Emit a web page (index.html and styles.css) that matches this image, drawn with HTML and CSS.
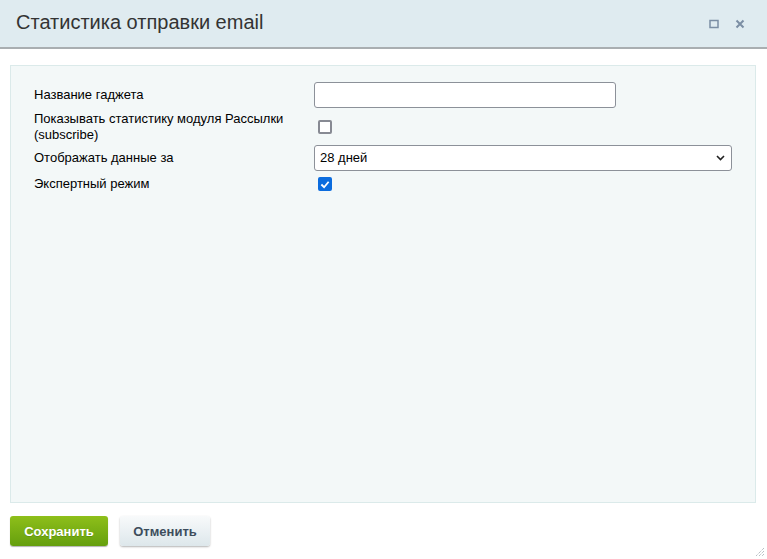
FILE: index.html
```
<!doctype html>
<html>
<head>
<meta charset="utf-8">
<title>Статистика отправки email</title>
<link rel="stylesheet" href="styles.css">
</head>
<body>
	<div class="dialog">
		<div class="head">
			<span class="title">Статистика отправки email</span>
			<span class="icons">
				<svg width="10" height="10" viewBox="0 0 10 10"><rect x="1" y="1.5" width="8" height="7" fill="none" stroke="#7b8ea4" stroke-width="1.5"/></svg>
				<svg width="10" height="10" viewBox="0 0 10 10"><path d="M1.5 1.5L8.5 8.5M8.5 1.5L1.5 8.5" stroke="#7b8ea4" stroke-width="2"/></svg>
			</span>
		</div>
		<div class="content">
			<div class="panel">
				<table class="form">
					<tr>
						<td class="lbl">Название гаджета</td>
						<td><input type="text" class="txt"></td>
					</tr>
					<tr class="r2">
						<td class="lbl">Показывать статистику модуля Рассылки (subscribe)</td>
						<td><span class="chk"></span></td>
					</tr>
					<tr>
						<td class="lbl">Отображать данные за</td>
						<td>
							<div class="sel">28 дней
								<svg width="9" height="6" viewBox="0 0 9 6"><path d="M1 1l3.5 3.5L8 1" fill="none" stroke="#222" stroke-width="1.6"/></svg>
							</div>
						</td>
					</tr>
					<tr class="r4">
						<td class="lbl">Экспертный режим</td>
						<td><span class="chk on"><svg width="11" height="9" viewBox="0 0 11 9"><path d="M1.5 4.5l3 3L9.5 1.5" fill="none" stroke="#fff" stroke-width="2"/></svg></span></td>
					</tr>
				</table>
			</div>
		</div>
		<div class="foot">
			<span class="btn save">Сохранить</span>
			<span class="btn cancel">Отменить</span>
		</div>
		<svg class="grip" width="10" height="10" viewBox="0 0 10 10"><path d="M9 1L1 9M9 4L4 9M9 7L7 9" stroke="#9aa4ab" stroke-width="1" stroke-dasharray="1 1"/></svg>
	</div>
</body>
</html>
```
FILE: styles.css
```
*{ margin:0; padding:0; box-sizing:border-box; }
body{ width:767px; height:559px; background:#fff; font-family:"Liberation Sans", Arial, sans-serif; font-size:13px; color:#000; overflow:hidden; }
.dialog{ position:relative; height:559px; display:flex; flex-direction:column; }
.head{ height:49px; background:#dfebf0; border-bottom:2px solid #a9aeb1; display:flex; align-items:center; justify-content:space-between; padding:0 22px 0 16px; flex-shrink:0; }
.title{ font-size:20px; color:#333; margin-top:-2px; }
.icons{ display:flex; gap:16px; align-items:center; }
.content{ padding:16px 11px 0 10px; }
.panel{ height:438px; background:#f3f8f8; border:1px solid #dbeaea; padding:15px 0 0 23px; }
.form{ border-collapse:collapse; }
.form td{ padding:1px 0; vertical-align:middle; line-height:16px; }
.form .lbl{ width:280px; padding-right:8px; }
.form .r2 td{ padding:2px 0 1px; }
.form .r4 td{ padding:4px 0 3px; }
.txt{ display:block; width:302px; height:26px; border:1px solid #8c9199; border-radius:3px; background:#fff; }
.chk{ display:block; width:14px; height:14px; border:2px solid #878a93; border-radius:2px; background:#fff; margin-left:4px; }
.chk.on{ background:#0b6cde; border-color:#0b6cde; display:flex; align-items:center; justify-content:center; }
.sel{ width:418px; height:26px; border:1px solid #8c9199; border-radius:3px; background:#fff; display:flex; align-items:center; justify-content:space-between; padding:0 6px 0 5px; font-size:13px; }
.foot{ display:flex; gap:12px; padding:13px 10px 0; }
.btn{ display:inline-flex; align-items:center; justify-content:center; height:30px; border-radius:3px; font-weight:bold; font-size:13px; }
.save{ width:98px; background:linear-gradient(#8ebf1a,#659f0e); color:#fff; box-shadow:0 1px 1px rgba(0,0,0,.3); text-shadow:0 1px 0 rgba(0,0,0,.15); }
.cancel{ width:90px; background:linear-gradient(#f8fafb,#dde7eb); color:#3d4d5c; box-shadow:0 1px 2px rgba(0,0,0,.3); }
.grip{ position:absolute; right:2px; bottom:2px; }
```
